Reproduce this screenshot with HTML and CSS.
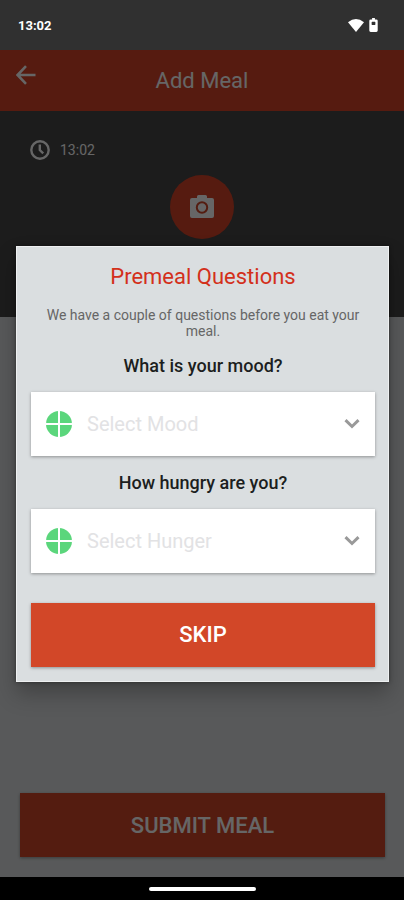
FILE: index.html
```html
<!DOCTYPE html>
<html lang="en">
<head>
<meta charset="utf-8">
<meta name="viewport" content="width=device-width, initial-scale=1">
<title>Add Meal</title>
<link rel="stylesheet" href="styles.css">
</head>
<body>
<header class="status-bar">
  <span class="status-time">13:02</span>
  <span class="status-icons">
    <svg width="16" height="13" viewBox="0 0 16 13" aria-hidden="true"><path fill="#fff" d="M0 3.2Q8-3.2 16 3.2L8 13z"/></svg>
    <svg width="9" height="14" viewBox="0 0 9 15" aria-hidden="true"><path fill="#fff" fill-rule="evenodd" d="M3 0h3v1.500h1.500q1.500 0 1.500 1.500v10.500q0 1.500-1.500 1.500h-6Q0 15 0 13.500V3q0-1.500 1.500-1.500H3zM3 4q-.5 0-.5.5v2.500q0 .5.5.5h3q.5 0 .5-.5V4.500Q6.500 4 6 4z"/></svg>
  </span>
</header>
<div class="screen">
  <main class="page">
    <div class="app-bar">
      <button class="back" type="button" aria-label="Back">
        <svg width="20" height="20" viewBox="0 0 20 20" fill="none" stroke="#fff" stroke-width="2.600" aria-hidden="true"><path d="M19.500 10H2M10 1.200L1.500 10l8.500 8.800"/></svg>
      </button>
      <h1 class="app-title">Add Meal</h1>
    </div>
    <section class="meal-head">
      <div class="meal-time">
        <svg width="20" height="20" viewBox="0 0 20 20" fill="none" stroke="#fff" stroke-width="2.400" aria-hidden="true"><circle cx="10" cy="10" r="8.700"/><path d="M9.800 4.500V10l3.400 3.400"/></svg>
        <time>13:02</time>
      </div>
      <button class="photo" type="button" aria-label="Take photo">
        <svg width="26" height="24" viewBox="0 0 26 24" aria-hidden="true"><path fill="#fff" d="M8 3V1.500Q8 0 9.500 0h7Q18 0 18 1.500V3h5q2 0 2 2v16q0 2-2 2H3q-2 0-2-2V5q0-2 2-2z"/><circle cx="13" cy="12.500" r="5.200" fill="none" stroke="#d24728" stroke-width="2"/></svg>
      </button>
    </section>
    <button class="action submit" type="button">SUBMIT MEAL</button>
  </main>
  <div class="overlay">
    <form class="dialog" role="dialog" aria-labelledby="dialog-title">
      <h2 class="dialog-title" id="dialog-title">Premeal Questions</h2>
      <p class="dialog-text">We have a couple of questions before you eat your meal.</p>
      <label class="question" for="mood">What is your mood?</label>
      <div class="field">
        <svg class="plus" width="26" height="26" viewBox="0 0 26 26" aria-hidden="true"><circle cx="13" cy="13" r="13" fill="#5bd67c"/><path d="M13 0v26M0 13h26" stroke="#fff" stroke-width="2"/></svg>
        <select class="select" id="mood"><option>Select Mood</option></select>
        <svg class="chevron" width="16" height="10" viewBox="0 0 16 10" fill="none" stroke="#999" stroke-width="3" aria-hidden="true"><path d="M1.500 1.200L8 7.500l6.500-6.300"/></svg>
      </div>
      <label class="question" for="hunger">How hungry are you?</label>
      <div class="field">
        <svg class="plus" width="26" height="26" viewBox="0 0 26 26" aria-hidden="true"><circle cx="13" cy="13" r="13" fill="#5bd67c"/><path d="M13 0v26M0 13h26" stroke="#fff" stroke-width="2"/></svg>
        <select class="select" id="hunger"><option>Select Hunger</option></select>
        <svg class="chevron" width="16" height="10" viewBox="0 0 16 10" fill="none" stroke="#999" stroke-width="3" aria-hidden="true"><path d="M1.500 1.200L8 7.500l6.500-6.300"/></svg>
      </div>
      <button class="action skip" type="button">SKIP</button>
    </form>
  </div>
</div>
<footer class="nav-bar"><span class="nav-handle"></span></footer>
</body>
</html>
```
FILE: styles.css
```css
* { box-sizing: border-box; }
body {
  margin: 0;
  min-height: 100vh;
  display: flex;
  flex-direction: column;
  font-family: Roboto, sans-serif;
  background: #000;
}
h1, h2, p { margin: 0; font-weight: 400; }
svg { display: block; flex: none; }
button { border: 0; padding: 0; font-family: inherit; cursor: pointer; }

.status-bar {
  height: 50px;
  padding: 0 26px 0 18px;
  display: flex;
  align-items: center;
  justify-content: space-between;
  background: #303030;
  color: #fff;
}
.status-time { font-size: 13px; font-weight: 700; }
.status-icons { display: flex; align-items: center; gap: 5px; }

.screen {
  position: relative;
  flex: 1;
  display: flex;
  flex-direction: column;
}
.page {
  flex: 1;
  display: flex;
  flex-direction: column;
  background: #dcdfe1;
}
.app-bar {
  height: 61px;
  padding: 0 16px;
  display: grid;
  grid-template-columns: 20px 1fr 20px;
  background: #d64529;
  color: #fff;
}
.back { align-self: start; margin-top: 15px; background: none; }
.app-title {
  align-self: center;
  text-align: center;
  font-size: 22px;
  line-height: 28px;
}
.meal-head {
  height: 206px;
  padding: 29px 30px 0;
  display: flex;
  flex-direction: column;
  background: #464646;
  color: #fff;
}
.meal-time {
  display: flex;
  align-items: center;
  gap: 10px;
  font-size: 14px;
  line-height: 20px;
}
.photo {
  align-self: center;
  width: 64px;
  height: 64px;
  margin-top: 15px;
  border-radius: 50%;
  display: grid;
  place-items: center;
  background: #d64529;
}

.action {
  height: 64px;
  background: #d24728;
  color: #fff;
  font-size: 22px;
  font-weight: 500;
  box-shadow: 0 1px 3px rgba(0, 0, 0, .35);
}
.submit { margin: auto 19px 20px 20px; }

.overlay {
  position: absolute;
  inset: 0;
  padding: 0 15px 0 16px;
  display: grid;
  align-items: center;
  background: rgba(0, 0, 0, .6);
}
.dialog {
  padding: 17px 13px 14px 14px;
  display: flex;
  flex-direction: column;
  background: #dadee0;
  border: 1px solid #eef0f1;
  box-shadow: 0 12px 20px rgba(0, 0, 0, .25), 0 0 4px rgba(0, 0, 0, .4);
  text-align: center;
}
.dialog-title { font-size: 22px; line-height: 26px; color: #d3301b; }
.dialog-text {
  margin: 17px 14px 16px;
  font-size: 14px;
  line-height: 16px;
  color: #666;
}
.question {
  font-size: 18px;
  line-height: 22px;
  font-weight: 500;
  color: #1c1e20;
}
.field {
  position: relative;
  margin: 15px 0 16px;
  display: grid;
  align-items: center;
  box-shadow: 0 1px 3px rgba(0, 0, 0, .35);
}
.select {
  width: 100%;
  height: 64px;
  padding: 0 40px 0 56px;
  border: 0;
  border-radius: 0;
  appearance: none;
  background: #fff;
  color: #e2e2e4;
  font-family: inherit;
  font-size: 20px;
}
.plus, .chevron { position: absolute; pointer-events: none; }
.plus { left: 15px; }
.chevron { right: 15px; }
.skip { margin-top: 14px; }

.nav-bar {
  height: 23px;
  display: grid;
  place-items: center;
  background: #000;
}
.nav-handle { width: 107px; height: 4px; border-radius: 2px; background: #fff; }
```
